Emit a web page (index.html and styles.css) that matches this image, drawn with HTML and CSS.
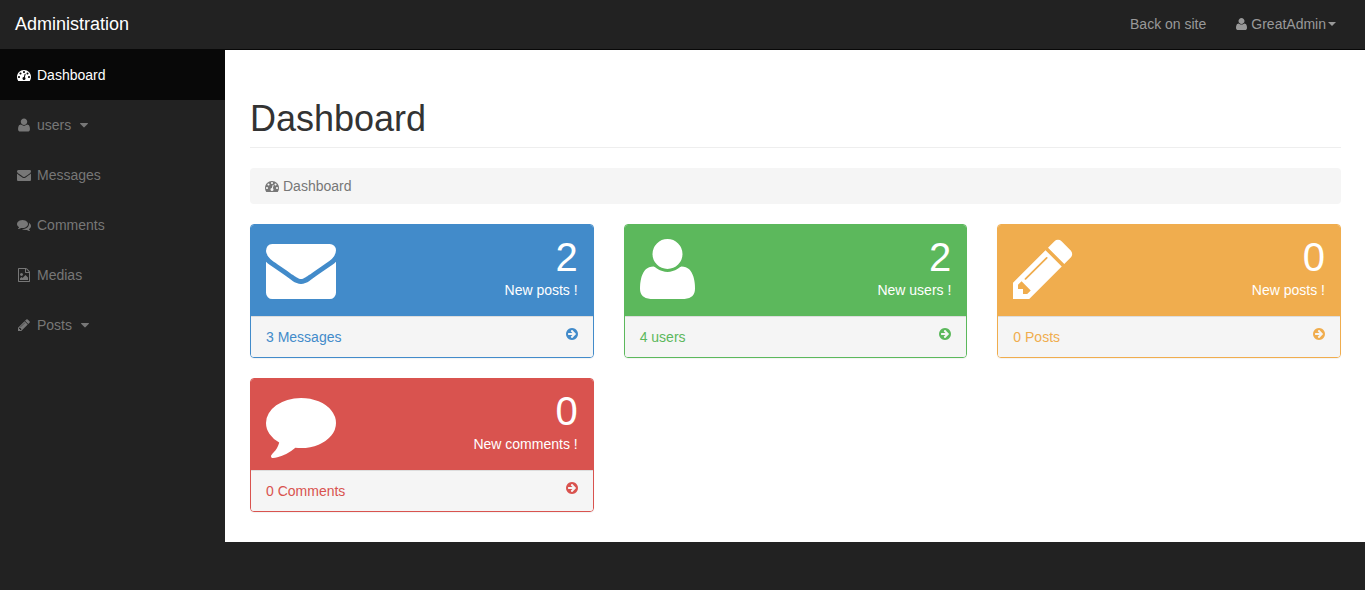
FILE: index.html
```
<!DOCTYPE html>
<html lang="en">
<head>
    <meta charset="UTF-8">
    <meta name="viewport" content="width=device-width, initial-scale=1.0">
    <title>Administration - Dashboard</title>
    <link rel="stylesheet" href="styles.css">
</head>
<body>
    <!-- Shared icons -->
    <svg class="icon-defs" aria-hidden="true">
        <defs>
            <path id="i-dashboard" d="M384 1152q0-53-37.5-90.5t-90.5-37.5-90.5 37.5-37.5 90.5 37.5 90.5 90.5 37.5 90.5-37.5 37.5-90.5zm192-448q0-53-37.5-90.5t-90.5-37.5-90.5 37.5-37.5 90.5 37.5 90.5 90.5 37.5 90.5-37.5 37.5-90.5zm428 481l101-382q6-26-7.5-48.5t-38.5-29.5-48 6.5-30 39.5l-101 382q-60 5-107 43.5t-63 98.5q-20 77 20 146t117 89 146-20 89-117q16-60-6-117t-72-91zm660-33q0-53-37.5-90.5t-90.5-37.5-90.5 37.5-37.5 90.5 37.5 90.5 90.5 37.5 90.5-37.5 37.5-90.5zm-640-640q0-53-37.5-90.5t-90.5-37.5-90.5 37.5-37.5 90.5 37.5 90.5 90.5 37.5 90.5-37.5 37.5-90.5zm448 192q0-53-37.5-90.5t-90.5-37.5-90.5 37.5-37.5 90.5 37.5 90.5 90.5 37.5 90.5-37.5 37.5-90.5zm320 448q0 261-141 483-19 29-54 29h-1402q-35 0-54-29-141-221-141-483 0-182 71-348t191-286 286-191 348-71 348 71 286 191 191 286 71 348z"/>
            <path id="i-user" d="M1600 1405q0 120-73 189.5t-194 69.5h-874q-121 0-194-69.5t-73-189.5q0-53 3.5-103.5t14-109 26.5-108.5 43-97.5 62-81 85.5-53.5 111.5-20q9 0 42 21.5t74.5 48 108 48 133.5 21.5 133.5-21.5 108-48 74.5-48 42-21.5q61 0 111.5 20t85.5 53.5 62 81 43 97.5 26.5 108.5 14 109 3.5 103.5zm-320-893q0 159-112.5 271.5t-271.5 112.5-271.5-112.5-112.5-271.5 112.5-271.5 271.5-112.5 271.5 112.5 112.5 271.5z"/>
            <path id="i-envelope" d="M1792 710v794q0 66-47 113t-113 47h-1472q-66 0-113-47t-47-113v-794q44 49 101 87 362 246 497 345 57 42 92.5 65.5t94.5 48 110 24.5h2q51 0 110-24.5t94.5-48 92.5-65.5q170-123 498-345 57-39 100-87zm0-294q0 79-49 151t-122 123q-376 261-468 325-10 7-42.5 31t-54 38.5-52 32.5-57.5 27-50 9h-2q-23 0-50-9t-57.5-27-52-32.5-54-38.5-42.5-31q-91-64-262-182.5t-205-142.5q-62-42-117-115.5t-55-136.5q0-78 41.5-130t118.5-52h1472q65 0 112.5 47t47.5 113z"/>
            <path id="i-comments" d="M1408 768q0 139-94 257t-256.5 186.5-353.5 68.5q-86 0-176-16-124 88-278 128-36 9-86 16h-3q-11 0-20.5-8t-11.5-21q-1-3-1-6.5t.5-6.5 2-6l2.5-5 3.5-5.5 4-5 4.5-5 4-4.5q5-6 23-25t26-29.5 22.5-29 25-38.5 20.5-44q-124-72-195-177t-71-224q0-139 94-257t256.5-186.5 353.5-68.5 353.5 68.5 256.5 186.5 94 257zm384 256q0 120-71 224.5t-195 176.5q10 24 20.5 44t25 38.5 22.5 29 26 29.5 23 25q1 1 4 4.5t4.5 5 4 5 3.5 5.5l2.5 5 2 6 .5 6.5-1 6.5q-3 14-13 22t-22 7q-50-7-86-16-154-40-278-128-90 16-176 16-271 0-472-132 58 4 88 4 161 0 309-45t264-129q125-92 192-212t67-254q0-77-23-152 129 71 204 178t75 230z"/>
            <path id="i-image" d="M1596 380q28 28 48 76t20 88v1152q0 40-28 68t-68 28h-1344q-40 0-68-28t-28-68v-1600q0-40 28-68t68-28h896q40 0 88 20t76 48zm-444-244v376h376q-10-29-22-41l-313-313q-12-12-41-22zm384 1528v-1024h-416q-40 0-68-28t-28-68v-416h-768v1536h1280zm-128-448v320h-1024v-192l192-192 128 128 384-384zm-832-192q-80 0-136-56t-56-136 56-136 136-56 136 56 56 136-56 136-136 56z"/>
            <path id="i-pencil" d="M491 1536l91-91-235-235-91 91v107h128v128h107zm523-928q0-22-22-22-10 0-17 7l-542 542q-7 7-7 17 0 22 22 22 10 0 17-7l542-542q7-7 7-17zm-54-192l416 416-832 832h-416v-416zm683 96q0 53-37 90l-166 166-416-416 166-165q36-38 90-38 53 0 91 38l235 234q37 39 37 91z"/>
            <path id="i-comment" d="M1792 896q0 174-120 321.5t-326 233-450 85.5q-70 0-145-8-198 175-460 242-49 14-114 22-17 2-30.5-9t-17.5-29v-1q-3-4-.5-12t2-10 4.5-9.5l6-9 7-8.5 8-9q7-8 31-34.5t34.5-38 31-39.5 32.5-51 27-59 26-76q-157-89-247.5-220t-90.5-281q0-130 71-248.5t191-204.5 286-136.5 348-50.5q244 0 450 85.5t326 233 120 321.5z"/>
            <path id="i-caret" d="M1408 704q0 26-19 45l-448 448q-19 19-45 19t-45-19l-448-448q-19-19-19-45t19-45 45-19h896q26 0 45 19t19 45z"/>
            <path id="i-arrow" d="M1413 896q0-27-18-45l-91-91-362-362q-18-18-45-18t-45 18l-91 91q-18 18-18 45t18 45l189 189h-502q-26 0-45 19t-19 45v128q0 26 19 45t45 19h502l-189 189q-19 19-19 45t19 45l91 91q18 18 45 18t45-18l362-362 91-91q18-18 18-45zm251 0q0 209-103 385.5t-279.5 279.5-385.5 103-385.5-103-279.5-279.5-103-385.5 103-385.5 279.5-279.5 385.5-103 385.5 103 279.5 279.5 103 385.5z"/>
        </defs>
    </svg>

    <header class="navbar">
        <a class="navbar-brand" href="#">Administration</a>
        <nav class="top-nav">
            <a href="#">Back on site</a>
            <button type="button">
                <svg class="icon-user" viewBox="192 0 1408 1792"><use href="#i-user"/></svg>
                GreatAdmin
                <span class="caret"></span>
            </button>
        </nav>
    </header>

    <div class="wrapper">
        <nav class="side-nav">
            <ul>
                <li class="active"><a href="#"><svg class="icon" viewBox="0 0 1792 1792"><use href="#i-dashboard"/></svg>Dashboard</a></li>
                <li>
                    <button type="button">
                        <svg class="icon" viewBox="96 64 1600 1664"><use href="#i-user"/></svg>users
                        <svg class="icon" viewBox="0 0 1792 1792"><use href="#i-caret"/></svg>
                    </button>
                </li>
                <li><a href="#"><svg class="icon" viewBox="0 0 1792 1792"><use href="#i-envelope"/></svg>Messages</a></li>
                <li><a href="#"><svg class="icon" viewBox="0 0 1792 1792"><use href="#i-comments"/></svg>Comments</a></li>
                <li><a href="#"><svg class="icon" viewBox="0 0 1792 1792"><use href="#i-image"/></svg>Medias</a></li>
                <li>
                    <button type="button">
                        <svg class="icon" viewBox="0 0 1792 1792"><use href="#i-pencil"/></svg>Posts
                        <svg class="icon" viewBox="0 0 1792 1792"><use href="#i-caret"/></svg>
                    </button>
                </li>
            </ul>
        </nav>

        <main class="page">
            <h1 class="page-header">Dashboard</h1>

            <ol class="breadcrumb">
                <li><svg class="icon-small" viewBox="0 0 1792 1792"><use href="#i-dashboard"/></svg>Dashboard</li>
            </ol>

            <div class="panels">
                <section class="panel panel-blue">
                    <div class="panel-heading">
                        <svg class="icon-big" viewBox="0 26 1792 1792"><use href="#i-envelope"/></svg>
                        <div class="stat">
                            <div class="huge">2</div>
                            <div>New posts !</div>
                        </div>
                    </div>
                    <a class="panel-footer" href="#">
                        <span>3 Messages</span>
                        <svg class="icon-arrow" viewBox="128 0 1536 1792"><use href="#i-arrow"/></svg>
                    </a>
                </section>

                <section class="panel panel-green">
                    <div class="panel-heading">
                        <svg class="icon-big" viewBox="192 26 1408 1792"><use href="#i-user"/></svg>
                        <div class="stat">
                            <div class="huge">2</div>
                            <div>New users !</div>
                        </div>
                    </div>
                    <a class="panel-footer" href="#">
                        <span>4 users</span>
                        <svg class="icon-arrow" viewBox="128 0 1536 1792"><use href="#i-arrow"/></svg>
                    </a>
                </section>

                <section class="panel panel-yellow">
                    <div class="panel-heading">
                        <svg class="icon-big" viewBox="128 26 1536 1792"><use href="#i-pencil"/></svg>
                        <div class="stat">
                            <div class="huge">0</div>
                            <div>New posts !</div>
                        </div>
                    </div>
                    <a class="panel-footer" href="#">
                        <span>0 Posts</span>
                        <svg class="icon-arrow" viewBox="128 0 1536 1792"><use href="#i-arrow"/></svg>
                    </a>
                </section>

                <section class="panel panel-red">
                    <div class="panel-heading">
                        <svg class="icon-big" viewBox="0 26 1792 1792"><use href="#i-comment"/></svg>
                        <div class="stat">
                            <div class="huge">0</div>
                            <div>New comments !</div>
                        </div>
                    </div>
                    <a class="panel-footer" href="#">
                        <span>0 Comments</span>
                        <svg class="icon-arrow" viewBox="128 0 1536 1792"><use href="#i-arrow"/></svg>
                    </a>
                </section>
            </div>
        </main>
    </div>
</body>
</html>
```

FILE: styles.css
```
* {
    box-sizing: border-box;
}
body {
    margin: 0;
    background: #222;
    color: #333;
    font-family: "Liberation Sans", Arial, sans-serif;
    font-size: 14px;
    line-height: 20px;
}
a {
    text-decoration: none;
}
button {
    border: none;
    background: none;
    font: inherit;
    cursor: pointer;
}
ul, ol {
    margin: 0;
    padding: 0;
    list-style: none;
}
svg {
    flex: none;
    fill: currentColor;
}
.icon-defs {
    display: none;
}

/* Top bar */
.navbar {
    display: flex;
    justify-content: space-between;
    padding: 14px 14px 15px 0;
    border-bottom: 1px solid #080808;
}
.navbar-brand {
    padding: 0 15px;
    color: #fff;
    font-size: 18px;
}
.top-nav {
    display: flex;
}
.top-nav a,
.top-nav button {
    display: flex;
    align-items: center;
    padding: 0 15px;
    color: #999;
}
.icon-user {
    width: 11px;
    height: 14px;
    margin-right: 4px;
}
.caret {
    margin-left: 2px;
    border-top: 4px solid;
    border-left: 4px solid transparent;
    border-right: 4px solid transparent;
}

/* Sidebar */
.wrapper {
    display: flex;
    align-items: flex-start;
}
.side-nav {
    flex: none;
    width: 225px;
}
.side-nav a,
.side-nav button {
    display: flex;
    align-items: center;
    gap: 4px;
    width: 100%;
    padding: 15px;
    color: #777;
}
.side-nav .active a {
    background: #080808;
    color: #fff;
}
.icon {
    width: 18px;
    height: 14px;
}

/* Content */
.page {
    flex: 1;
    padding: 49px 24px 30px 25px;
    background: #fff;
}
.page-header {
    margin: 0 0 20px;
    padding-bottom: 8px;
    border-bottom: 1px solid #eee;
    font-size: 36px;
    font-weight: 500;
    line-height: 40px;
}
.breadcrumb {
    margin-bottom: 20px;
    padding: 8px 15px;
    border-radius: 4px;
    background: #f5f5f5;
    color: #777;
}
.breadcrumb li {
    display: flex;
    align-items: center;
    gap: 4px;
}
.icon-small {
    width: 14px;
    height: 14px;
}

/* Panels */
.panels {
    display: grid;
    grid-template-columns: repeat(3, 1fr);
    gap: 20px 30px;
}
.panel {
    border: 1px solid;
    border-radius: 4px;
    box-shadow: 0 1px 1px rgba(0, 0, 0, 0.05);
    overflow: hidden;
}
.panel-heading {
    display: flex;
    justify-content: space-between;
    padding: 10px 15px 11px;
    color: #fff;
}
.icon-big {
    height: 70px;
}
.stat {
    text-align: right;
}
.huge {
    font-size: 40px;
    line-height: 45px;
}
.panel-footer {
    display: flex;
    justify-content: space-between;
    padding: 10px 15px;
    border-top: 1px solid #ddd;
    background: #f5f5f5;
    color: inherit;
}
.icon-arrow {
    width: 12px;
    height: 14px;
}
.panel-blue {
    color: #428bca;
}
.panel-blue .panel-heading {
    background: #428bca;
}
.panel-green {
    color: #5cb85c;
}
.panel-green .panel-heading {
    background: #5cb85c;
}
.panel-yellow {
    color: #f0ad4e;
}
.panel-yellow .panel-heading {
    background: #f0ad4e;
}
.panel-red {
    color: #d9534f;
}
.panel-red .panel-heading {
    background: #d9534f;
}
```
